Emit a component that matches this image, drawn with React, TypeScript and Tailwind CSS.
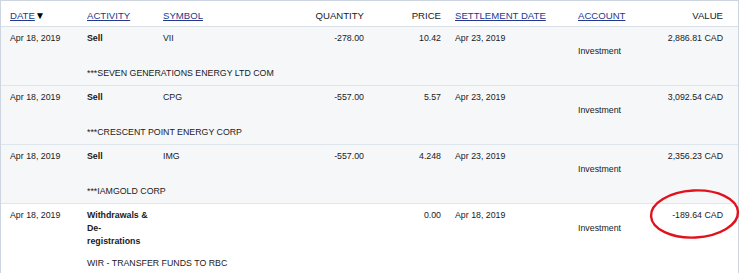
import React from "react";

type Rec = {
  date: string;
  activity: string;
  symbol: string;
  qty: string;
  price: string;
  settle: string;
  account: string;
  value: string;
  desc: string;
  bg: string;
};

const rows: Rec[] = [
  { date: "Apr 18, 2019", activity: "Sell", symbol: "VII", qty: "-278.00", price: "10.42", settle: "Apr 23, 2019", account: "Investment", value: "2,886.81 CAD", desc: "***SEVEN GENERATIONS ENERGY LTD COM", bg: "bg-[#f6f7f9]" },
  { date: "Apr 18, 2019", activity: "Sell", symbol: "CPG", qty: "-557.00", price: "5.57", settle: "Apr 23, 2019", account: "Investment", value: "3,092.54 CAD", desc: "***CRESCENT POINT ENERGY CORP", bg: "bg-[#f6f7f9]" },
  { date: "Apr 18, 2019", activity: "Sell", symbol: "IMG", qty: "-557.00", price: "4.248", settle: "Apr 23, 2019", account: "Investment", value: "2,356.23 CAD", desc: "***IAMGOLD CORP", bg: "bg-[#f6f7f9]" },
  { date: "Apr 18, 2019", activity: "Withdrawals & De-registrations", symbol: "", qty: "", price: "0.00", settle: "Apr 18, 2019", account: "Investment", value: "-189.64 CAD", desc: "WIR - TRANSFER FUNDS TO RBC", bg: "bg-white" },
];

const cols = "grid grid-cols-[77px_76px_100px_101px_77px_137px_80px_65px]";

export default function App() {
  return (
    <div className="relative w-[743px] h-[273px] overflow-hidden bg-white text-[#1a1a1a]" style={{ fontFamily: '"Liberation Sans", Arial, sans-serif' }}>
      <div className="w-[739px] border-l border-t border-r border-[#cdd6e0]">
        <div className={`${cols} h-[26px] pl-[9px] pr-[15px] pt-[8px] leading-[13px] text-[9.6px] border-b border-[#d9e0e8]`}>
          <div className="whitespace-nowrap">
            <span className="underline text-[#24388f]">DATE</span>
            <span className="text-[10px] text-black">▼</span>
          </div>
          <div><span className="underline text-[#24388f]">ACTIVITY</span></div>
          <div><span className="underline text-[#24388f]">SYMBOL</span></div>
          <div className="text-right">QUANTITY</div>
          <div className="text-right">PRICE</div>
          <div className="pl-[14px]"><span className="underline text-[#24388f]">SETTLEMENT DATE</span></div>
          <div><span className="underline text-[#24388f]">ACCOUNT</span></div>
          <div className="text-right">VALUE</div>
        </div>
        {rows.map((r, i) => (
          <div key={i} className={`${cols} ${r.bg} pl-[9px] pr-[15px] pt-[5px] pb-[5px] leading-[13px] text-[8.8px] border-b border-[#dfe5ec]`}>
            <div>{r.date}</div>
            <div className="font-bold pr-[12px]">{r.activity}</div>
            <div>{r.symbol}</div>
            <div className="text-right">{r.qty}</div>
            <div className="text-right">{r.price}</div>
            <div className="pl-[14px]">{r.settle}</div>
            <div className="pt-[13px]">{r.account}</div>
            <div className="text-right whitespace-nowrap">{r.value}</div>
            <div className="col-start-2 col-span-7 mt-[9px]">{r.desc}</div>
          </div>
        ))}
      </div>
      <svg className="absolute left-[646px] top-[186px]" width="97" height="56" viewBox="0 0 97 56">
        <ellipse cx="48.5" cy="28" rx="43.5" ry="23.5" transform="rotate(-3 48.5 28)" fill="none" stroke="#e0121c" strokeWidth="2.4" />
      </svg>
    </div>
  );
}
